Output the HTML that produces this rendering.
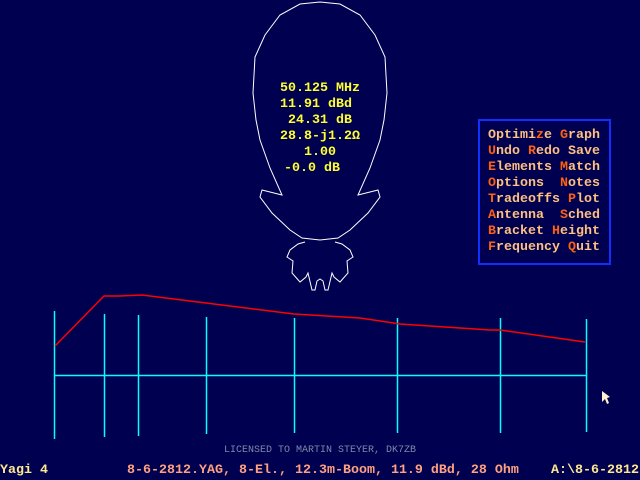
<!DOCTYPE html><html><head><style>
body{margin:0;width:640px;height:480px;background:#000050;overflow:hidden;position:relative;font-family:"Liberation Mono",monospace}
.t{position:absolute;white-space:pre;font-size:13.33px;line-height:16px;font-weight:bold}
.c{color:#ffff30;left:0;width:640px;text-align:center;top:81px}
.m{left:478px;top:119px;width:129px;height:142px;border:2px solid #1030ff;box-sizing:content-box}
.m div{position:absolute;left:8px;color:#ffc080;font-size:13.33px;line-height:16px;font-weight:bold;white-space:pre}
.m b{color:#ff6010}
</style></head><body>
<svg width="640" height="480" style="position:absolute;left:0;top:0">
<path fill="none" stroke="#fff" stroke-width="1" d="M320,2 L300,4 L280,15 L265,35 L255,57 L253,93 L256,120 L260,140 L270,168 L282,195 L262,190 L260,197 L272,213 L290,230 L302,238 L320,240 L338,238 L350,230 L368,213 L380,197 L378,190 L358,195 L370,168 L380,140 L384,120 L387,93 L385,57 L375,35 L360,15 L340,4 Z"/>
<path fill="none" stroke="#fff" stroke-width="1" d="M305,242 L298,244 L290,250 L287,257 L293,261 L292,273 L300,282 L306,277 L308,273 L312,290 L315,290 L317,281 L320,279 L323,281 L325,290 L328,290 L332,273 L334,277 L340,282 L348,273 L347,261 L353,257 L350,250 L342,244 L335,242"/>
<g stroke="#00ffff" stroke-width="1.5">
<line x1="54.5" y1="311" x2="54.5" y2="439"/><line x1="104.5" y1="314" x2="104.5" y2="437"/><line x1="138.5" y1="315" x2="138.5" y2="436"/><line x1="206.5" y1="317" x2="206.5" y2="434"/><line x1="294.5" y1="318" x2="294.5" y2="433"/><line x1="397.5" y1="318" x2="397.5" y2="433"/><line x1="500.5" y1="318" x2="500.5" y2="433"/><line x1="586.5" y1="319" x2="586.5" y2="432"/>
<line x1="54" y1="375.5" x2="586" y2="375.5"/></g>
<polyline fill="none" stroke="#ff0000" stroke-width="1.5" points="55,346 104,296 120,296 142,295 206,303 294,314 360,318 400,324 490,330 500,330 585,342"/>
<path d="M602,391 L602,402 L605,399 L607,404 L609,403 L607,398 L610,397 Z" fill="#fff0d0"/>
</svg>
<div class="t c">50.125 MHz
11.91 dBd 
 24.31 dB 
28.8-j1.2Ω
1.00
-0.0 dB  </div>
<div class="t m">
<div style="top:7px">Optimi<b>z</b>e <b>G</b>raph</div>
<div style="top:23px"><b>U</b>ndo <b>R</b>edo Save</div>
<div style="top:39px"><b>E</b>lements <b>M</b>atch</div>
<div style="top:55px"><b>O</b>ptions  <b>N</b>otes</div>
<div style="top:71px"><b>T</b>radeoffs <b>P</b>lot</div>
<div style="top:87px"><b>A</b>ntenna  <b>S</b>ched</div>
<div style="top:103px"><b>B</b>racket <b>H</b>eight</div>
<div style="top:119px"><b>F</b>requency <b>Q</b>uit</div>
</div>
<div class="t" style="left:0;width:640px;text-align:center;top:443px;font-size:10px;font-weight:normal;color:#8088a8">LICENSED TO MARTIN STEYER, DK7ZB</div>
<div class="t" style="left:0;top:463px;color:#ffe890">Yagi 4</div>
<div class="t" style="left:127px;top:463px;color:#ffa080">8-6-2812.YAG, 8-El., 12.3m-Boom, 11.9 dBd, 28 Ohm</div>
<div class="t" style="left:551px;top:463px;color:#ffe890">A:\8-6-2812</div>
</body></html>
